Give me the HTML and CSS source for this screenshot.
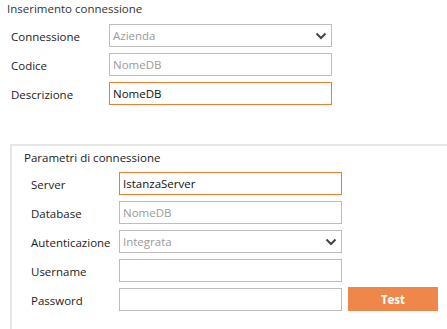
FILE: index.html
```html
<!DOCTYPE html>
<html lang="it">
<head>
  <meta charset="UTF-8" />
  <title>Inserimento connessione</title>
  <link rel="stylesheet" href="styles.css">
</head>
<body>
  <div class="page">
    <div class="section-title">Inserimento connessione</div>
    <div class="form">
      <div class="row">
        <label class="label">Connessione</label>
        <div class="field select placeholder">
          <span>Azienda</span>
          <svg class="chevron" width="12" height="8" viewBox="0 0 12 8"><path d="M1.5 1.5 L6 6 L10.5 1.5" fill="none" stroke="#444" stroke-width="2"/></svg>
        </div>
      </div>
      <div class="row">
        <label class="label">Codice</label>
        <div class="field placeholder">NomeDB</div>
      </div>
      <div class="row">
        <label class="label">Descrizione</label>
        <div class="field focus">NomeDB</div>
      </div>
    </div>

    <div class="group">
      <div class="group-title">Parametri di connessione</div>
      <div class="form">
        <div class="row">
          <label class="label">Server</label>
          <div class="field focus">IstanzaServer</div>
        </div>
        <div class="row">
          <label class="label">Database</label>
          <div class="field placeholder">NomeDB</div>
        </div>
        <div class="row">
          <label class="label">Autenticazione</label>
          <div class="field select placeholder">
            <span>Integrata</span>
            <svg class="chevron" width="12" height="8" viewBox="0 0 12 8"><path d="M1.5 1.5 L6 6 L10.5 1.5" fill="none" stroke="#444" stroke-width="2"/></svg>
          </div>
        </div>
        <div class="row">
          <label class="label">Username</label>
          <div class="field"></div>
        </div>
        <div class="row">
          <label class="label">Password</label>
          <div class="field"></div>
          <button class="btn" type="button">Test</button>
        </div>
      </div>
    </div>
  </div>
</body>
</html>
```

FILE: styles.css
```css
html, body {
  margin: 0;
  background: #fff;
  overflow: hidden;
}
body {
  font-family: 'Open Sans', 'Noto Sans', Arial, sans-serif;
  font-size: 11.5px;
  color: #222;
}
.page {
  width: 447px;
  height: 329px;
  overflow: hidden;
}
.section-title {
  padding: 1px 0 0 7px;
  height: 17px;
  line-height: 16px;
  color: #333;
}
.form {
  display: flex;
  flex-direction: column;
  gap: 6px;
}
.page > .form {
  margin-top: 6px;
  padding-left: 11px;
}
.row {
  display: flex;
  align-items: center;
  height: 23px;
}
.label {
  width: 98px;
  flex: none;
  color: #222;
  padding-top: 2px;
}
.group .label {
  width: 88px;
}
.field {
  box-sizing: border-box;
  width: 223px;
  height: 23px;
  border: 1px solid #bdbdbd;
  padding: 0 3px;
  display: flex;
  align-items: center;
  color: #111;
  background: #fff;
}
.field.placeholder {
  color: #9a9a9a;
}
.field.focus {
  border-color: #ed7d31;
}
.select {
  justify-content: space-between;
  padding-right: 4px;
}
.chevron {
  display: block;
}
.group {
  box-sizing: border-box;
  margin: 39px 0 0 10px;
  border-top: 2px solid #e6e6e6;
  border-left: 2px solid #e6e6e6;
  height: 185px;
  padding-left: 19px;
}
.group-title {
  margin: 4px 0 0 -7px;
  height: 16px;
  line-height: 16px;
  color: #222;
}
.group .form {
  margin-top: 6px;
}
.btn {
  margin-left: 6px;
  width: 90px;
  height: 24px;
  margin-top: -1px;
  border: none;
  background: #f0874a;
  color: #fff;
  font-family: inherit;
  font-size: 11.5px;
  font-weight: 700;
  cursor: pointer;
}
```
